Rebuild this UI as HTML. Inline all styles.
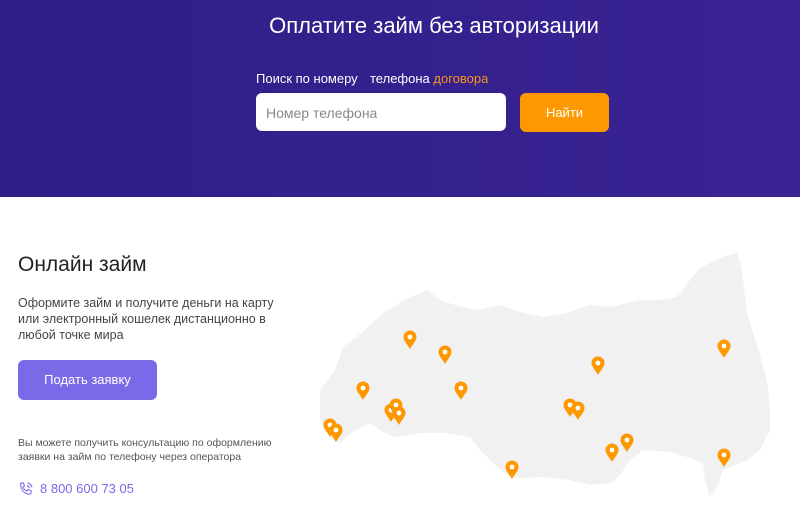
<!DOCTYPE html>
<html><head><meta charset="utf-8"><style>
*{margin:0;padding:0;box-sizing:border-box}
body{width:800px;height:521px;overflow:hidden;background:#fff;font-family:"Liberation Sans",sans-serif;position:relative}
.top{position:absolute;left:0;top:0;width:800px;height:197px;background:linear-gradient(90deg,#2e1e86,#3a2394)}
.t{position:absolute;color:#fff}
</style></head><body>
<div class="top">
<div class="t" style="left:0;width:868px;top:13px;text-align:center;font-size:22px">Оплатите займ без авторизации</div>
<div class="t" style="left:256px;top:71px;font-size:13px">Поиск по номеру</div>
<div class="t" style="left:370px;top:71px;font-size:13px">телефона <span style="color:#f7941d">договора</span></div>
<div style="position:absolute;left:256px;top:93px;width:250px;height:38px;background:#fff;border-radius:6px;color:#888;font-size:14px;padding:12px 0 0 10px">Номер телефона</div>
<div style="position:absolute;left:520px;top:93px;width:89px;height:39px;background:#fe9800;border-radius:6px;color:#fff;font-size:13px;text-align:center;line-height:39px">Найти</div>
</div>
<div style="position:absolute;left:18px;top:253px;font-size:21px;color:#222">Онлайн займ</div>
<div style="position:absolute;left:18px;top:295px;font-size:12.5px;color:#444;line-height:16px;width:268px">Оформите займ и получите деньги на карту или электронный кошелек дистанционно в любой точке мира</div>
<div style="position:absolute;left:18px;top:360px;width:139px;height:40px;background:#7b6ae8;border-radius:6px;color:#fff;font-size:13px;text-align:center;line-height:40px">Подать заявку</div>
<div style="position:absolute;left:18px;top:436px;font-size:10.5px;color:#555;line-height:14px;width:280px">Вы можете получить консультацию по оформлению заявки на займ по телефону через оператора</div>
<svg style="position:absolute;left:18px;top:481px" width="16" height="16" viewBox="0 0 16 16" fill="none" stroke="#8a76e8" stroke-width="1.2"><path d="M3 2l2.5 0 1 3-1.5 1.2c.8 1.8 2 3 3.8 3.8L10 8.5l3 1V12c0 .8-.7 1.3-1.5 1.2C6.5 12.7 3.3 9.5 2.8 4.5 2.7 3.2 2.5 2 3 2z"/><path d="M9 4.5c1.3.3 2.2 1.2 2.5 2.5M9.5 2c2.3.4 4 2.1 4.4 4.4"/></svg>
<div style="position:absolute;left:40px;top:481px;font-size:13px;color:#7b6ae8">8 800 600 73 05</div>
<svg style="position:absolute;left:0;top:0" width="800" height="521">
<path fill="#f1f1f1" d="M320,390 L335,370 343,347 365,330 383,313 405,300 427,290 440,300 455,305 477,310 500,305 520,312 543,317 570,312 590,305 610,307 640,300 660,300 677,297 690,280 700,268 710,263 725,256 737,253 742,270 747,313 757,345 767,380 770,410 770,430 760,450 747,460 735,465 723,470 718,485 710,497 705,480 703,463 690,458 670,452 643,450 630,460 620,475 610,483 590,485 570,480 543,477 525,478 510,477 495,465 480,450 470,437 445,433 420,433 405,436 393,437 380,430 370,423 355,430 340,443 333,440 330,437 322,425 320,417Z"/>
<defs><g id="pin"><path fill="#fe9800" d="M0,10 C-2,6 -6.5,2 -6.5,-2 A6.5,6.5 0 1 1 6.5,-2 C6.5,2 2,6 0,10Z"/><circle cx="0" cy="-2" r="2.4" fill="#fff"/></g></defs>
<use href="#pin" x="410" y="339"/><use href="#pin" x="445" y="354"/><use href="#pin" x="363" y="390"/><use href="#pin" x="461" y="390"/><use href="#pin" x="391" y="412"/><use href="#pin" x="396" y="407"/><use href="#pin" x="399" y="415"/><use href="#pin" x="330" y="427"/><use href="#pin" x="336" y="432"/><use href="#pin" x="598" y="365"/><use href="#pin" x="570" y="407"/><use href="#pin" x="578" y="410"/><use href="#pin" x="612" y="452"/><use href="#pin" x="627" y="442"/><use href="#pin" x="512" y="469"/><use href="#pin" x="724" y="348"/><use href="#pin" x="724" y="457"/>
</svg>
</body></html>
